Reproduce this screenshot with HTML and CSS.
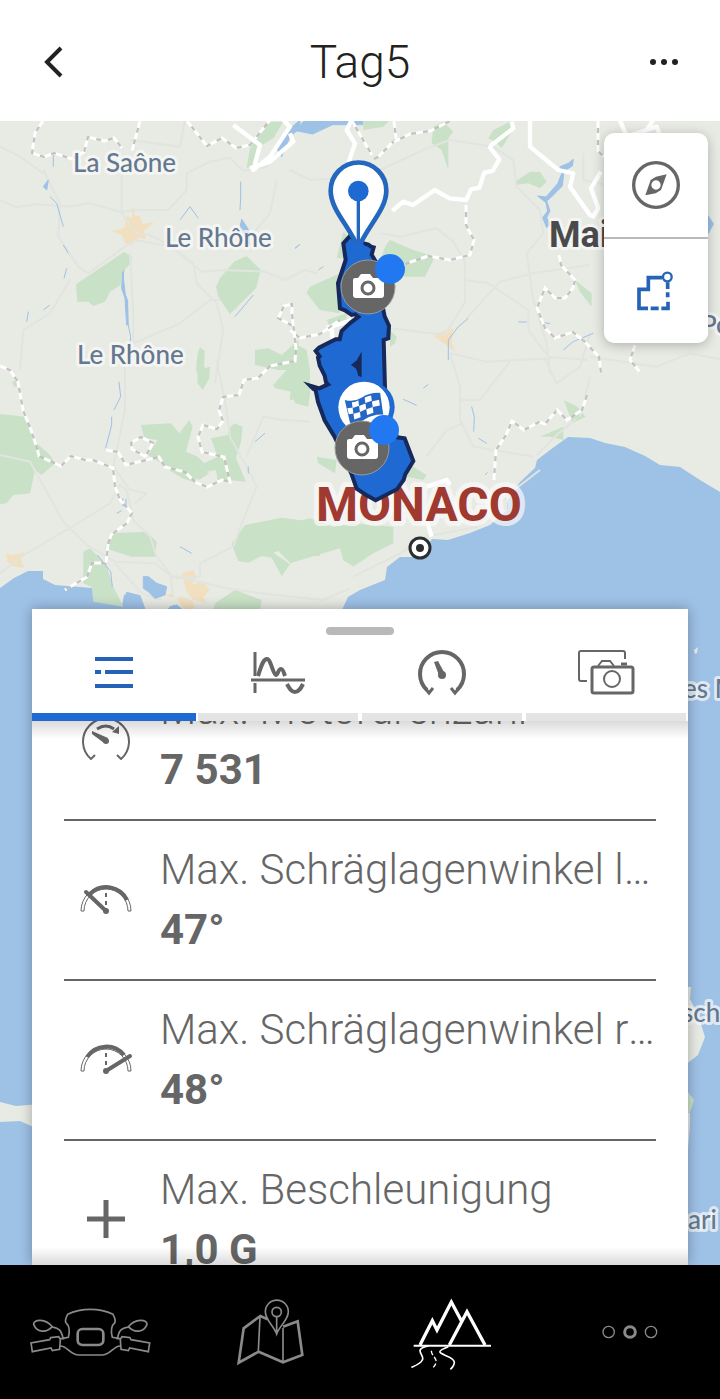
FILE: index.html
```html
<!DOCTYPE html>
<html lang="de">
  <head>
    <meta charset="UTF-8" />
    <meta name="viewport" content="width=device-width, initial-scale=1.0" />
    <title>Tag5</title>
    <link rel="stylesheet" href="styles.css">
  </head>
  <body>
    <header class="topbar">
      <button class="icon-btn" type="button" aria-label="Zurück">
        <svg width="44" height="44" viewBox="0 0 44 44" fill="none" stroke="#222" stroke-width="4"><path d="M27 8 13 22l14 14" /></svg>
      </button>
      <h1 class="title">Tag5</h1>
      <button class="icon-btn" type="button" aria-label="Mehr">
        <svg width="44" height="44" viewBox="0 0 44 44" fill="#222"><circle cx="11" cy="22" r="3" /><circle cx="22" cy="22" r="3" /><circle cx="33" cy="22" r="3" /></svg>
      </button>
    </header>

    <main class="stage">
      <svg class="map" viewBox="0 121 720 1144" preserveAspectRatio="xMidYMin slice" aria-hidden="true">
        <defs>
          <g id="camera">
            <circle r="27" fill="#666" stroke="#9a9a9a" />
            <path fill="#fff" d="M-15-7q0-2 2-2h3l3-4h9l3 4h8q3 0 3 3v14q0 3-3 3h-25q-3 0-3-3z" />
            <circle cy="1" r="6" fill="#fff" stroke="#666" stroke-width="3" />
            <circle cx="22" cy="-18" r="15" fill="#2178f0" />
          </g>
          <path id="regions" d="M43 121l-8 12-3 20 12 4 10-4 18 6 12-7 4-15 16 4 10-3 8 10M140 121l-8 30M187 121l12 15 8 10 15-8 14 10 14-3 20-25M0 366l10 4 8 12 5 28 8 20 6 18 2 8 4 2 18 8 10-10 14 4 8 0 20 8 2 18 5 14 12 13-5 10-16 12-3 10-2 18-14 0-5 14-14 8-8 5M106 450l12 2 8 13 33-8 6 10 20 5 10 10 12 5 15-7 8 2-6-25-22-5-4-15 5-12 14 4 6-8-4-10 4-14 16-2 5-15 14-2 12-12 25-5 1-12-4-35 0-10-8 2-6 12 15 8M146 457l-14-8-1-6 10-6 12 6-8 14M394 142l16-8 20-3 20-10M394 121l2 18-18 18-4 2M352 121l20 34M466 205l0 20 8 15-4 15-20 5-22-4-20 7-10 5M494 480l2-30 10-15 6-14 12 9 15-8 6 2 12-14 10 10 15-10 5-15M559 255l2 10 14 15-2 8-8 10-10 0-10-10-8 20 8 20 10 10 18-6 12 10 14 15 2 16M635 345l-5 15 10 12M598 121l0 30 6 6M290 330l10 8 20-4 20-14" />
        </defs>

        <!-- land -->
        <path class="land" d="M0 121H720V492L700 480 680 467 660 465 645 456 625 447 605 443 590 438 568 437 550 450 537 460 535 468 520 482 508 500 507 510 490 525 470 533 448 540 432 539 420 557 400 557 387 567 385 580 360 590 348 597 341 612H146L140 600 130 593 124 595 122 606 96 598 92 588 55 585 43 579V571H28L14 578 0 588z" />
        <path class="land" d="M0 1102 16 1106 40 1104V1130L20 1121 0 1122zM680 987h11l-1 12 8 16 7 22-7 18-18 14z" />
        <path class="wood" d="M680 1092h8l6 8-4 12-10 10z" />
        <path class="land" d="M680 1113h10v12l-2 24h-8zM694 650l4-3-1 6-2 1z" />

        <!-- forests -->
        <g transform="translate(0 120) scale(.3333)">
          <path class="wood" d="M228 493 372 396 396 410 392 430 368 455 362 495 330 515 315 545 280 558 265 545 232 545zM740 408 783 450 768 505 690 582 655 530 648 500 660 475 702 425zM600 682l14 10-2 60h-24l5-50zM765 690l40-5 40 20 50-45v90h-60l-70-15zM800 5h50l-30 50-50 30-10 50-20 10 10-60z" />
        </g>
        <g transform="translate(0 360) scale(.3333)">
          <path class="wood" d="M0 162 75 170 95 215 110 250 150 285 165 310 125 345 105 330 90 400 40 405 20 430 0 432zM590 0l15 0 10 25 15-5-2 35-20 35-15-20zM820 75l40-45 60-10 10 70-5 50-40-10-10-35-50-10zM423 195l90-5 25 30 30-40 10 20-20 75 35 15 20 20 40-20-20-55 50-10 5-20 15-15 25 10-5 45-15 50 30 70-55-5-30 0-5-30-30 5-40 30-30-10-50-30-20-20-35-20 30-45-40-5zM37 65l15-5v20h-10zM330 520l110-5 30 30-5 45-70 0-80-25zM250 575l20-10 50 50 15 55 35 70-90-15-5-45-25-10zM735 495l110-22 115 15v100l-70 0-20 20-35-35-15 5 50 35-25 35-30-55-30-5-40 20-30-5-20-50zM645 730l60-40 80 30-5 30H640zM568 335l40-5 20 10-30 20z" />
          <path class="town" d="M18 580l20 5 35-8-10 25 10 22-35-5-15-12zM545 640l35-10 10 20-15 25 30-10 25 25-20 20 10 20-40-10-20-25-5-20zM495 705l25-5v15zM530 715l20-5 30 15 5 20-30 5z" />
        </g>
        <g transform="translate(290 120) scale(.3333)">
          <path class="wood" d="M430 20l30-15 30 30-15 20 0 95-20-60-30-20zM610 30l50-25 5 30-30 50-20-20-20-10zM675 185l45-30 30 0 20 30-20 20-35-15-40 5zM300 360l70 30 65 20-30 60-60 0-30-40-40-20 10-30zM160 335l20 20-5 60-35 0zM60 500l90-40 0 120-60-10-40-50zM300 630l20 20-5 20-15 10zM855 480l50 40v40l-35-45zM80 1010l60 10-5 40-50-30zM360 1035l50 30-10 15-50-10zM0 1210l60-15 70 25 60-10 120 10v50l-60 30-60 40-30-20-10-35-100 30-50 15zM10 670l40 20 10 60 0 80-60 10zM822 840l40 20 25 30-40 20zM750 950l70-30 0 40-40-10zM110 600l60-20 0 20-50 20zM220 0h80l-20 20-60 10z" />
          <path class="town" d="M440 640l50-15-5 40 10 30-60-45z" />
        </g>
        <path class="town" d="M133 204l2 12 5 0 2 8 12-2-10 9 2 8-8-1-6 7-7-2-3-8-10-4 12-3 3-12 5 2z" />

        <!-- minor roads -->
        <g class="road" transform="translate(0 120) scale(.3333)">
          <path d="M0 240l50 22 60-10 90 8 70-10 90 25 55-5 90 0 55-60 0-50 70-35 60-12 40 40 70-12 25-55M130 150l50 100-5 100 60 90 30 20 110-80 30-20 110 20 90 75 60-5 130 5 60 25 60-30 35 10M0 80l60 30 70 50M365 100l0 180 45 60 40 5 50 25 80 60 10 60 60 60 20 80-25 160M390 400l10 180 0 90 140-60 90-70 30 0M555 0l-15 80-150-20M830 180l-20 100-50 60M210 480l-60 100-80 50-10 120" />
        </g>
        <g class="road" transform="translate(0 360) scale(.3333)">
          <path d="M0 285l90 20 100 180 70 70 85 50 120 5 45 35 170 40 100 15 190 20 80-35M0 640l80-60 120-70 130-80 30-55 20 15 20 90 50 50 20 60 40 50 10 70M375 0l0 150-35 170 50 70 50 10-35 30M650 0l30 150 10 80 50 90 30 60-40 100-30 80-100 50 0 40-90 5M740 290l50-120 60 10 80 5M345 610l80 90 60 20" />
        </g>
        <g class="road" transform="translate(290 120) scale(.3333)">
          <path d="M0 150l60 30 70-5M270 150l130-60 80-30 130 20 60 40 10 80 70 70 10 70-50 60 20 140 40 130 10 90M270 340l60 10 110-25 50 40 35 60 0 120-60 100-160-20M525 480l70 10 120 80 0 60 60 80 120 10M480 700l110 25 200-10M530 595l100-110 100-25 170-25M480 700l30 100 0 100 40 80 180 30M510 840l60 0 90-115M410 1010l60-80 50-20M760 710l40 80 70-50 30-100M870 890l30-120M740 1005l60-60 60-50M190 1370l140-70 80-50 150-30 100-100 90-70M880 100l0 80 100 20 60 80M900 330l120-10M900 710l200 30 100-40 100 20" />
        </g>

        <!-- rivers and lakes -->
        <g class="river-line" transform="translate(0 120) scale(.3333)">
          <path d="M160 105v35M150 230l20 20 20 70M190 375l15 25M372 450l-5 50 15 40 2 70 8 40-5 90M722 185v50l-2 35M540 300l30-40 25 35M200 445l-8 30M80 605l5-30M130 570l20-15M705 590l55-65M885 385l15-12" />
          <path class="lake" d="M830 85l25-45 45-40v25l-30 25-25 60zM130 200l15-20-5 30zM725 298l20 30 5 50-15-30-15-25zM368 455l8 70 7 20 1 70-4 0-5-80-10-30z" />
          <path class="lake" d="M910 5l60-5h118v14h-90l-60 28-50-10z" />
        </g>
        <g class="river-line" transform="translate(0 360) scale(.3333)">
          <path d="M357 65l5 45-20 40M335 170v25l-18 70M292 585l40 50 5 45M350 460l15-8M540 560l35 20M745 320v20M765 245l30-25M368 415v22h10v-20" />
          <path class="lake" d="M430 650l15 0 25 20 30 10-5 25-30 10-20-20-15-10zM370 742l10-45 40 10 15 40h-60zM510 740l20-5 15 12h-40z" />
        </g>
        <g class="river-line" transform="translate(290 120) scale(.3333)">
          <path d="M15 385l15-12M85 450l15-10M475 720v-60l30-40 30-25M685 606h25M750 606l30 5M545 860l8 30-2 45M340 838l40 18M565 955l25 15M400 805l15-12M585 1065l8-8M820 690l30-25 60-25" />
          <path class="lake" d="M810 140l25-10 15-12-3 20-25 15-5 45-35 35-12 10 10 30-10 20 10 20-10 10-12-30 15-20-5-25-25-20 25 3 35-40 12-30z" />
        </g>
        <path class="lake" d="M706 212l8 12-8 14z" />

        <!-- borders -->
        <g transform="translate(290 120) scale(.3333)">
          <path class="border" d="M665 5l5 20-65 50-5 8 28 35-20 35-25 5-15 45-25 5-14 32-50-5-45-25-65 45-30-10-32 28M720 0v80l85 70 45 10-10 40 60 85 10 5 15-25-22-60 30-50M185 0l-15 30 25 40-20 60M-20 0l20 20-60 90 -50 40 20-75-80-60M0 40l10 25-70 60-60 20M110 625l15 5 5 35M110 625l75-25M410 1100l60-20 10 15M410 1200l15 50M990 0l20 50 60-20 20-30M1040 40l60-20 20 50-60 20" />
        </g>
        <use href="#regions" class="region-base" />
        <use href="#regions" class="region" />

        <!-- place names -->
        <g class="river">
          <text x="73" y="172">La Saône</text>
          <text x="165" y="247">Le Rhône</text>
          <text x="77" y="364">Le Rhône</text>
          <text x="701" y="334">Po</text>
          <text x="683" y="698">es M</text>
          <text x="682" y="1022">sch</text>
          <text x="688" y="1229">ari</text>
        </g>
        <text class="city" x="549" y="247">Mai</text>
        <text class="country" x="316" y="521">MONACO</text>
        <circle cx="420" cy="548" r="10" fill="#fff" stroke="#2c2f30" stroke-width="3" />
        <circle cx="420" cy="548" r="4" fill="#2c2f30" />

        <!-- tour -->
        <g transform="translate(290 120) scale(.3333)">
          <path class="tour" d="M205 366l30 8 8 6 8 2-6 22 12 20 10 80 17 85 13 28-2 38-14 5 4 144 6 80 31 68 22 3 26 68-24 40-5 17-20 28-64 33-27-15-30-20-16-45-50-110-30-50-20-55-7-35-7-4-10-10 28 8 26-12-6-6-4-20-15-30-5-24 5-4-12-16 10-10 50-25 12 0 6-25 27-25 23-17-10-8-10 2-20-14-15-6-6-75 23-70-7-50 20-22z" />
          <path fill="#16295a" d="M215 695v77l-10-5-6-20-16-13 16-12z" />
          <circle cx="234" cy="862" r="80" fill="#1e69d2" />
          <circle cx="222" cy="862" r="77" fill="#fff" />
          <g transform="translate(222 862) rotate(-8)">
            <path fill="#2467c4" d="M-54-30q26 12 52 0t56-6v66q-28-6-56 6t-46 4z" />
            <path fill="#fff" d="M-34-20q10 2 20-3v16l-20 4zM6-29q10-3 20-3v16l-20 4zM-50-4l16 0v18h-14zM-14-6l20-5v17l-20 6zM26-14l22-2v17l-22 2zM-34 15l20-3v16l-20 4zM6 7l20-4v17l-20 4z" />
          </g>
          <path fill="#fff" stroke="#2467be" stroke-width="14" d="M205 385C180 320 122 270 122 212a83 84 0 0 1 167 0c0 58-58 108-84 173z" />
          <path stroke="#2467be" stroke-width="10" d="M205 213v160" />
          <circle cx="205" cy="213" r="31" fill="#1e69d2" />
          <path fill="#1e69d2" d="M180 385l15-20h20l15 20v20h-50z" />
        </g>
        <use href="#camera" x="368" y="287" />
        <use href="#camera" x="362" y="448" />
      </svg>

      <div class="map-tools">
        <button type="button" aria-label="Kompass">
          <svg width="52" height="52" viewBox="330 117 156 156" fill="none" stroke="#666">
            <circle cx="408" cy="195" r="67" stroke-width="10" />
            <path fill="#666" stroke="none" fill-rule="evenodd" d="M440 163l-17 47-16 10-31 6 16-46 16-10zM408 181a14 14 0 1 0 0 28 14 14 0 0 0 0-28z" />
          </svg>
        </button>
        <button type="button" aria-label="Route">
          <svg width="52" height="52" viewBox="330 435 156 156" fill="none" stroke="#2563b8" stroke-width="11">
            <path d="M426 473h-41v35h-28v57h27M392 565h24M424 565h20v-20M443 532v-15M443 507v-20" />
            <circle cx="442" cy="471" r="13" stroke-width="7" />
          </svg>
        </button>
      </div>

      <section class="sheet">
        <div class="handle"></div>
        <nav class="tabs">
          <button class="tab active" type="button" aria-label="Liste">
            <svg width="60" height="60" viewBox="0 0 60 60" stroke="#2563b8" stroke-width="4"><path d="M11 16h38M11 29h6M21 29h28M11 43h38" /></svg>
          </button>
          <button class="tab" type="button" aria-label="Verlauf">
            <svg width="60" height="60" viewBox="0 0 60 60" fill="none" stroke="#666" stroke-width="3">
              <path d="M7 9v24M7 40v10M3 37h54" />
              <path stroke-width="4" d="M10 33c3-9 5-17 9-17 4 0 6 16 9 16 2 0 2-6 5-6 2 0 3 4 4 7M39 41c3 5 4 8 8 8s6-4 8-8" />
            </svg>
          </button>
          <button class="tab" type="button" aria-label="Messwerte">
            <svg width="60" height="60" viewBox="0 0 60 60" fill="none" stroke="#666" stroke-width="3">
              <path stroke-width="4" d="M15 47a22 22 0 1 1 30 0" />
              <path d="M13 45l4 5 4-5M47 45l-4 5-4-5" />
              <path fill="#666" stroke="none" d="M22 19l4-1 7 13-5 4z" />
              <circle cx="30" cy="32" r="4" fill="#666" stroke="none" />
            </svg>
          </button>
          <button class="tab" type="button" aria-label="Fotos">
            <svg width="60" height="60" viewBox="0 0 60 60" fill="none" stroke="#666" stroke-width="2">
              <path d="M49 16v-6q0-2-2-2H5q-2 0-2 2v26q0 2 2 2h6" />
              <rect x="16" y="24" width="41" height="26" rx="2" stroke-width="3" />
              <path d="M22 23l4-5h8l4 5" />
              <path stroke-width="3" d="M45 21h6" />
              <circle cx="36" cy="36" r="8" />
            </svg>
          </button>
        </nav>

        <div class="stats-wrap">
          <ul class="stats" id="stats">
            <li class="stat">
              <svg width="84" height="80" viewBox="0 0 84 80" fill="none" stroke="#666" stroke-width="2">
                <path d="M31 55l-4 4a23 23 0 1 1 30 0l-4-4" />
                <path stroke-width="3" d="M33 29q9-6 17 0" />
                <path fill="#666" stroke="none" d="M48 32l7-6v8zM28 31l16 7-4 5-12-9z" />
                <circle cx="42" cy="41" r="3" fill="#666" stroke="none" />
              </svg>
              <div class="stat-text">
                <span class="label">Max. Motordrehzahl</span>
                <strong class="value">7 531</strong>
              </div>
            </li>
            <li class="stat">
              <svg width="84" height="80" viewBox="0 0 84 80" fill="none" stroke="#666">
                <path d="M17 51a25 25 0 0 1 50 0h-3a22 22 0 0 0-44 0z" />
                <path stroke-width="4" d="M26 34a23 23 0 0 1 37 6" />
                <path stroke-width="2" stroke-dasharray="4 4" d="M42 25v22" />
                <path stroke-width="4" stroke-linecap="round" d="M22 32l20 19" />
                <circle cx="42" cy="51" r="3" fill="#666" stroke="none" />
              </svg>
              <div class="stat-text">
                <span class="label">Max. Schräglagenwinkel links</span>
                <strong class="value">47°</strong>
              </div>
            </li>
            <li class="stat">
              <svg width="84" height="80" viewBox="0 0 84 80" fill="none" stroke="#666">
                <path d="M17 51a25 25 0 0 1 50 0h-3a22 22 0 0 0-44 0z" />
                <path stroke-width="4" d="M23 37a23 23 0 0 1 37-2" />
                <path stroke-width="2" stroke-dasharray="4 4" d="M42 25v22" />
                <path stroke-width="4" stroke-linecap="round" d="M66 36l-24 15" />
                <circle cx="42" cy="51" r="3" fill="#666" stroke="none" />
              </svg>
              <div class="stat-text">
                <span class="label">Max. Schräglagenwinkel rechts</span>
                <strong class="value">48°</strong>
              </div>
            </li>
            <li class="stat">
              <svg width="84" height="80" viewBox="0 0 84 80" stroke="#666" stroke-width="5"><path d="M23 39h38M42 20v38" /></svg>
              <div class="stat-text">
                <span class="label">Max. Beschleunigung</span>
                <strong class="value">1,0 G</strong>
              </div>
            </li>
          </ul>
        </div>
      </section>
    </main>

    <nav class="bottom-nav">
      <a href="#" aria-label="Fahrzeug">
        <svg width="130" height="80" viewBox="75 96 390 240" fill="none" stroke="#8a8a8a" stroke-width="5">
          <path d="M188 235l17-3c6-22 2-36-8-45q-2-10 6-24c40-20 96-20 136 0q8 14 6 24c-10 9-14 23-8 45l20 3" />
          <rect x="233" y="207" width="77" height="48" rx="14" stroke-width="8" />
          <path d="M101 193c0-16 35-18 56 7-18 20-46 18-56-7zM157 201c20 4 26 8 32 33M441 193c0-16-35-18-56 7 18 20 46 18 56-7zM385 201c-20 4-28 8-32 33" />
          <path d="M152 233l24-3 5 8-2 30-22 4-4-8-56 11-4-26 56-10zM390 233l-24-3-5 8 2 30 22 4 4-8 56 11 4-26-56-10z" />
          <path d="M181 236h12M361 236h-12M181 258c22 0 28 26 56 27h68c28-1 34-27 56-27" />
        </svg>
      </a>
      <a href="#" aria-label="Karte">
        <svg width="130" height="80" viewBox="615 96 390 240" fill="none" stroke="#8a8a8a" stroke-width="8">
          <path d="M803 178l-22-10-50 37-15 103 60-33 73 32 58-22-14-101-44 16" />
          <path stroke-width="5" d="M780 170l-5 103M849 204v100" />
          <path stroke-width="5" d="M830 222c-8-24-34-42-34-67a34 34 0 0 1 69 0c0 25-27 43-35 67zM830 170v50" />
          <circle cx="830" cy="156" r="14" stroke-width="5" />
        </svg>
      </a>
      <a href="#" aria-label="Touren">
        <svg width="130" height="80" viewBox="75 96 390 240" fill="none" stroke="#fff" stroke-width="10">
          <path d="M180 255l37-73 14 28 43-84 30 56M268 255l53-100 54 100" />
          <path stroke-width="6" d="M161 257h232" />
          <path stroke-width="5" d="M205 258c-50 10-8 28-18 42-6 12-18 16-33 22M265 260c-65 24 15 22 18 46q0 12-12 22" />
          <path stroke-width="4" stroke-dasharray="14 7" d="M214 272c0 20 28 24 6 50" />
        </svg>
      </a>
      <a href="#" aria-label="Mehr">
        <svg width="130" height="80" viewBox="615 96 390 240" fill="none" stroke="#8a8a8a" stroke-width="4">
          <circle cx="746" cy="216" r="17" /><circle cx="810" cy="216" r="16" stroke-width="9" /><circle cx="873" cy="216" r="17" />
        </svg>
      </a>
    </nav>

    <script>
      document.getElementById('stats').scrollTop = 60;
    </script>
  </body>
</html>
```
FILE: styles.css
```css
* {
  margin: 0;
  padding: 0;
  box-sizing: border-box;
}

body {
  display: flex;
  flex-direction: column;
  height: 100vh;
  background: #fff;
  color: #666;
  font-family: Roboto, sans-serif;
  overflow: hidden;
}

button {
  border: 0;
  background: none;
  cursor: pointer;
}

svg {
  display: block;
}

/* Header */
.topbar {
  display: flex;
  align-items: center;
  justify-content: space-between;
  padding: 34px 34px 31px;
}

.icon-btn {
  width: 44px;
  height: 44px;
}

.title {
  color: #222;
  font-size: 46px;
  font-weight: 300;
  line-height: 56px;
}

/* Map */
.stage {
  position: relative;
  display: flex;
  flex: 1;
  flex-direction: column;
  min-height: 0;
  padding: 488px 32px 0;
  background: #9ec1e6;
  overflow: hidden;
}

.map {
  position: absolute;
  inset: 0;
  width: 100%;
  height: 100%;
}

.land {
  fill: #e8eae4;
}

.wood {
  fill: #c9e1c6;
}

.town {
  fill: #f2dfc0;
}

.river-line {
  fill: none;
  stroke: #9ec1e6;
  stroke-width: 3;
}

.lake {
  fill: #9ec1e6;
}

.road {
  fill: none;
  stroke: #e1e4df;
  stroke-width: 6;
  stroke-linejoin: round;
}

.border {
  fill: none;
  stroke: #fff;
  stroke-width: 13;
  stroke-linejoin: round;
}

.region-base {
  fill: none;
  stroke: #c4c0c0;
  stroke-width: 2;
}

.region {
  fill: none;
  stroke: #fff;
  stroke-width: 3;
  stroke-dasharray: 7 5;
}

.tour {
  fill: #1e69d2;
  stroke: #16295a;
  stroke-width: 12;
}

.map text {
  paint-order: stroke;
  stroke: rgba(250, 250, 250, 0.7);
  stroke-width: 6px;
  stroke-linejoin: round;
}

.river {
  fill: #64788f;
  font-family: Lato, sans-serif;
  font-size: 26px;
  font-weight: 500;
}

.city {
  fill: #4a4a4a;
  font-size: 36px;
  font-weight: 700;
}

.map .country {
  fill: #a0392f;
  font-size: 48px;
  font-weight: 700;
  stroke-width: 10px;
}

.map-tools {
  position: absolute;
  top: 12px;
  right: 12px;
  width: 104px;
  border-radius: 10px;
  background: #fff;
  box-shadow: 0 2px 12px rgba(0, 0, 0, 0.25);
}

.map-tools button {
  display: flex;
  align-items: center;
  justify-content: center;
  width: 100%;
  height: 104px;
}

.map-tools button + button {
  height: 106px;
  border-top: 2px solid #b9b9b9;
}

/* Bottom sheet */
.sheet {
  position: relative;
  display: flex;
  flex: 1;
  flex-direction: column;
  min-height: 0;
  background: #fff;
  box-shadow: 0 0 12px rgba(0, 0, 0, 0.3);
}

.handle {
  width: 68px;
  height: 8px;
  margin: 18px auto 0;
  border-radius: 4px;
  background: #b9b9b9;
}

.tabs {
  display: grid;
  grid-template-columns: repeat(4, 1fr);
  padding-top: 8px;
}

.tab {
  position: relative;
  display: flex;
  justify-content: center;
  height: 78px;
}

.tab::after {
  content: "";
  position: absolute;
  right: 2px;
  bottom: 0;
  left: 2px;
  height: 8px;
  background: #e4e4e4;
}

.tab.active::after {
  right: 0;
  left: 0;
  background: #1e69d2;
}

.stats-wrap {
  position: relative;
  display: flex;
  flex: 1;
  min-height: 0;
}

.stats-wrap::before,
.stats-wrap::after {
  content: "";
  position: absolute;
  right: 0;
  left: 0;
  height: 18px;
  pointer-events: none;
}

.stats-wrap::before {
  top: 0;
  background: linear-gradient(rgba(0, 0, 0, 0.14), transparent);
}

.stats-wrap::after {
  bottom: 0;
  background: linear-gradient(transparent, rgba(0, 0, 0, 0.14));
}

.stats {
  flex: 1;
  min-width: 0;
  padding: 0 32px;
  list-style: none;
  overflow-y: auto;
  scrollbar-width: none;
}

.stat {
  display: flex;
  align-items: center;
  gap: 12px;
  padding: 19px 0;
  border-bottom: 2px solid #666;
}

.stat svg {
  flex: none;
}

.stat-text {
  min-width: 0;
}

.label,
.value {
  display: block;
  font-size: 42px;
  line-height: 60px;
  white-space: nowrap;
}

.label {
  font-weight: 300;
  overflow: hidden;
  text-overflow: ellipsis;
}

.value {
  font-weight: 700;
}

/* Bottom navigation */
.bottom-nav {
  display: grid;
  grid-template-columns: repeat(4, 1fr);
  height: 134px;
  background: #000;
}

.bottom-nav a {
  display: flex;
  align-items: center;
  justify-content: center;
}
```
